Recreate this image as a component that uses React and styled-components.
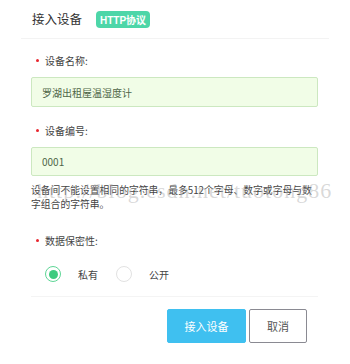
import React, { useState } from "react";
import styled, { createGlobalStyle } from "styled-components";

const GlobalStyle = createGlobalStyle`
  body {
    margin: 0;
    background: #fff;
    font-family: "Noto Sans CJK SC", "Noto Sans", sans-serif;
  }
`;

const Dialog = styled.div`
  position: relative;
  width: 350px;
  height: 364px;
  background: #fff;
  box-sizing: border-box;
`;

const Header = styled.div`
  height: 38px;
  margin: 0 21px;
  padding-left: 11px;
  display: flex;
  align-items: center;
  gap: 14px;
  border-bottom: 1px solid #f3f3f3;
`;

const Title = styled.h2`
  margin: 0;
  font-size: 12.5px;
  font-weight: 400;
  color: #333;
  line-height: 16px;
`;

const Badge = styled.span`
  display: inline-flex;
  align-items: center;
  height: 17px;
  padding: 0 4px;
  border-radius: 4px;
  background: #4dd6a8;
  color: #fff;
  font-size: 10px;
  font-weight: 700;
  font-family: "Liberation Sans", "Noto Sans CJK SC", sans-serif;
`;

const Body = styled.div`
  padding: 14px 32px 0 31px;
`;

const Label = styled.div`
  display: flex;
  align-items: center;
  height: 14px;
  padding-left: 5px;
  margin-top: ${(p) => p.$top || 0}px;
  font-size: 10px;
  color: #444;
`;

const Star = styled.span`
  width: 3px;
  height: 3px;
  border-radius: 50%;
  background: #e8262e;
  margin-right: 6px;
`;

const Input = styled.input`
  display: block;
  box-sizing: border-box;
  width: 100%;
  height: ${(p) => p.$h || 30}px;
  margin-top: 10px;
  padding: 0 10px;
  border: 1px solid #cce8c0;
  border-radius: 2px;
  background: #f1fde7;
  color: #4f6647;
  font-size: 10px;
  font-family: "Noto Sans CJK SC", "Noto Sans", sans-serif;
  outline: none;
`;

const Help = styled.p`
  margin: 7px 0 0;
  font-size: 9.8px;
  line-height: 14px;
  color: #444;
`;

const RadioRow = styled.div`
  display: flex;
  align-items: center;
  height: 16px;
  margin-top: 19px;
  padding-left: 14px;
`;

const RadioItem = styled.label`
  display: flex;
  align-items: center;
  gap: 17px;
  margin-right: 18px;
  font-size: 10px;
  color: #444;
  cursor: pointer;
`;

const Circle = styled.span`
  box-sizing: border-box;
  width: 16px;
  height: 16px;
  border-radius: 50%;
  border: 1px solid ${(p) => (p.$on ? "#5ed696" : "#e2e2e2")};
  display: flex;
  align-items: center;
  justify-content: center;
  &::after {
    content: "";
    width: 9px;
    height: 9px;
    border-radius: 50%;
    background: ${(p) => (p.$on ? "#3ecb7f" : "transparent")};
  }
`;

const Footer = styled.div`
  margin: 14px 32px 0 31px;
  padding: 12px 11px 0 0;
  border-top: 1px solid #f4f4f4;
  display: flex;
  justify-content: flex-end;
  gap: 3px;
`;

const Button = styled.button`
  box-sizing: border-box;
  height: 34px;
  width: ${(p) => p.$w}px;
  border-radius: 2px;
  border: 1px solid ${(p) => (p.$primary ? "#3fc0f0" : "#8a8a92")};
  background: ${(p) => (p.$primary ? "#3fc0f0" : "#fff")};
  color: ${(p) => (p.$primary ? "#fff" : "#555")};
  font-size: 11px;
  font-family: "Noto Sans CJK SC", "Noto Sans", sans-serif;
  cursor: pointer;
`;

const Watermark = styled.div`
  position: absolute;
  left: 37px;
  top: 178px;
  font-family: "Liberation Serif", serif;
  font-size: 22px;
  letter-spacing: 1px;
  color: rgba(170, 170, 170, 0.45);
  pointer-events: none;
  white-space: nowrap;
`;

export default function App() {
  const [secret, setSecret] = useState("private");
  return (
    <Dialog>
      <GlobalStyle />
      <Header>
        <Title>接入设备</Title>
        <Badge>HTTP协议</Badge>
      </Header>
      <Body>
        <Label>
          <Star />
          设备名称:
        </Label>
        <Input defaultValue="罗湖出租屋温湿度计" />
        <Label $top={16}>
          <Star />
          设备编号:
        </Label>
        <Input $h={29} defaultValue="0001" />
        <Help>
          设备间不能设置相同的字符串，最多512个字母、数字或字母与数字组合的字符串。
        </Help>
        <Label $top={22}>
          <Star />
          数据保密性:
        </Label>
        <RadioRow>
          <RadioItem onClick={() => setSecret("private")}>
            <Circle $on={secret === "private"} />
            私有
          </RadioItem>
          <RadioItem onClick={() => setSecret("public")}>
            <Circle $on={secret === "public"} />
            公开
          </RadioItem>
        </RadioRow>
      </Body>
      <Footer>
        <Button $primary $w={79}>
          接入设备
        </Button>
        <Button $w={58}>取消</Button>
      </Footer>
      <Watermark>http://blog.csdn.net/tuotong86</Watermark>
    </Dialog>
  );
}
